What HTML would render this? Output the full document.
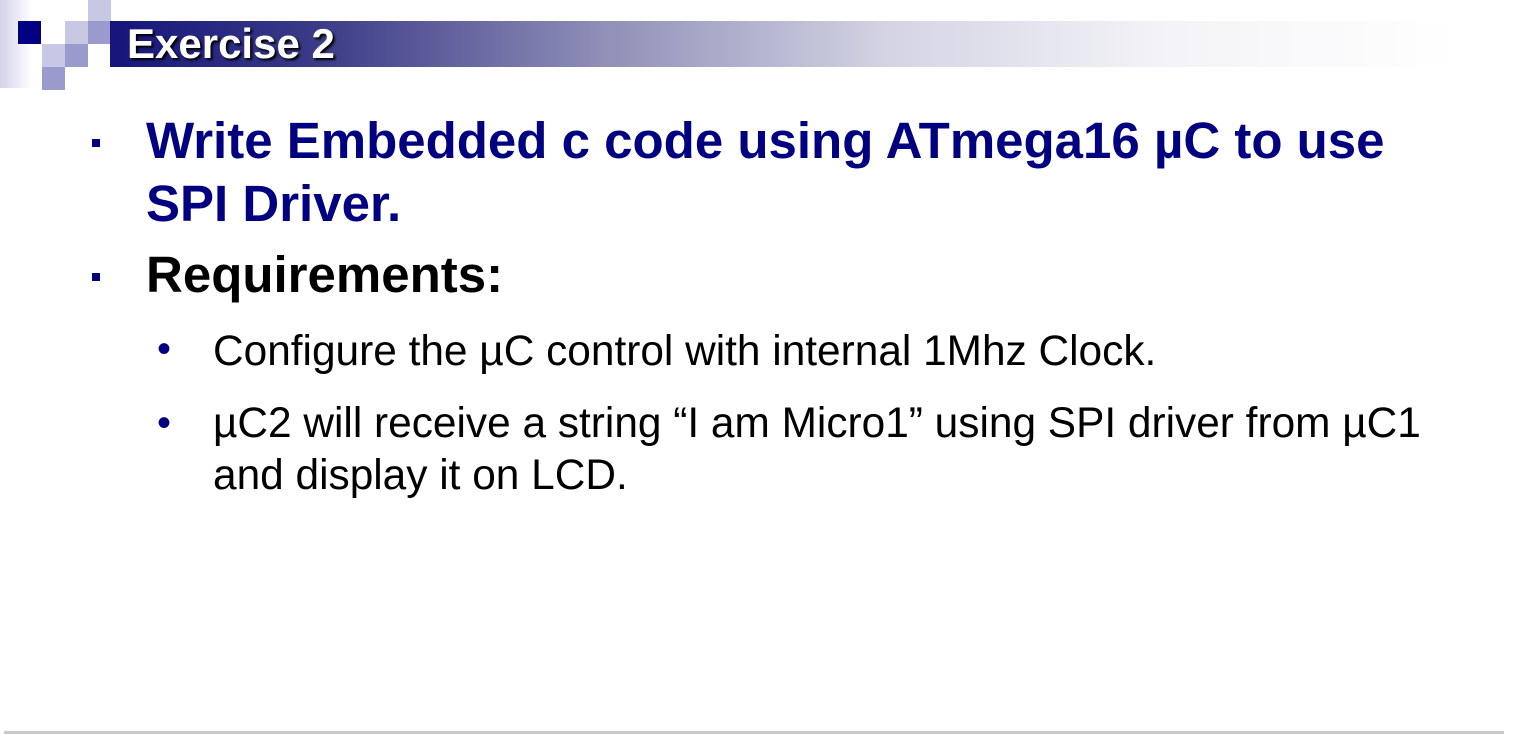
<!DOCTYPE html>
<html><head><style>
body{margin:0;width:1528px;height:734px;background:#fff;position:relative;overflow:hidden;font-family:"Liberation Sans",Arial,sans-serif}
.a{position:absolute}
.sq{position:absolute;width:23px;height:23px}
.l{background:#c8c8e4}.m{background:#9a9acc}
.t{position:absolute;white-space:nowrap}
</style></head><body>
<div class="a" style="left:0;top:0;width:32px;height:88px;background:linear-gradient(90deg,#d2d2ea,#fff)"></div>
<div class="sq" style="left:18px;top:21px;background:#000080"></div>
<div class="sq l" style="left:88px;top:0"></div>
<div class="sq l" style="left:65px;top:21px"></div>
<div class="sq m" style="left:88px;top:21px"></div>
<div class="sq l" style="left:42px;top:44px"></div>
<div class="sq m" style="left:65px;top:44px"></div>
<div class="sq m" style="left:42px;top:67px"></div>
<div class="a" style="left:110px;top:21px;width:1418px;height:46px;background:linear-gradient(90deg,#15157a 0%,#3c3c88 15%,#9090b8 35%,#d4d4e4 55%,#f4f4f8 75%,#fff 95%)"></div>
<div class="t" style="left:127px;top:20px;font-size:42px;font-weight:bold;color:#fff;text-shadow:2px 2px 2px #000">Exercise 2</div>
<div class="a" style="left:92px;top:139px;width:8px;height:8px;background:#000080"></div>
<div class="t" style="left:146px;top:109px;font-size:51px;font-weight:bold;color:#000080;line-height:63px">Write Embedded c code using ATmega16 µC to use<br>SPI Driver.</div>
<div class="a" style="left:92px;top:273px;width:8px;height:8px;background:#000080"></div>
<div class="t" style="left:146px;top:245px;font-size:51px;font-weight:bold;color:#000;line-height:60px">Requirements:</div>
<div class="t" style="left:157px;top:327px;font-size:40px;color:#000080">•</div>
<div class="t" style="left:213px;top:327px;font-size:42.4px;color:#000">Configure the µC control with internal 1Mhz Clock.</div>
<div class="t" style="left:157px;top:401px;font-size:40px;color:#000080">•</div>
<div class="t" style="left:213px;top:397px;font-size:42.4px;color:#000;line-height:52px">µC2 will receive a string “I am Micro1” using SPI driver from µC1<br>and display it on LCD.</div>
<div class="a" style="left:4px;top:731px;width:1500px;height:3px;background:#c8c8c8"></div>
</body></html>
